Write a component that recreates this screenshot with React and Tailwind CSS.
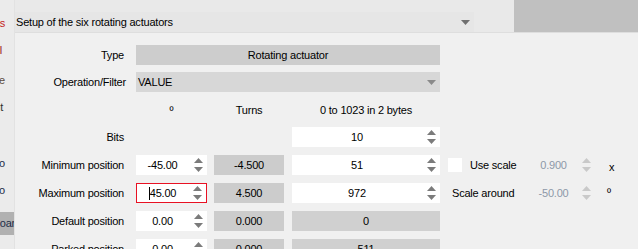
import React from 'react';

function Arrow({ up, color }) {
    return (
        <svg width="9" height="5" viewBox="0 0 9 5" className="block">
            <polygon points={up ? '0,5 4.5,0 9,5' : '0,0 9,0 4.5,5'} fill={color} />
        </svg>
    );
}

function Spinner({ disabled }) {
    const c = disabled ? '#c9c9c9' : '#7b7b7b';
    return (
        <div className="w-[18px] h-full flex flex-col items-center justify-center gap-[4px] shrink-0">
            <Arrow up color={c} />
            <Arrow color={c} />
        </div>
    );
}

function NumBox({ value, className, caret }) {
    return (
        <div className={`h-[20px] flex items-center ${className}`}>
            <div className="flex-1 flex items-center justify-center">
                {caret && <span className="w-px h-[13px] bg-black" />}
                <span>{value}</span>
            </div>
            <Spinner />
        </div>
    );
}

// list on the left, scrolled so only the word endings show
function SideStrip() {
    const items = [
        { text: 'Actuators', cls: 'mt-[14px] w-[5px] text-[#c42222]' },
        { text: 'Control', cls: 'mt-[9px] w-[2px] text-[#981818]' },
        { text: 'Interface', cls: 'mt-[12px] w-[5px] text-[#5b4a40]' },
        { text: 'Layout', cls: 'mt-[9px] w-[3px] text-[#2e2e2e]' },
        { text: 'Servo', cls: 'mt-[38px] w-[5px] text-[#1e2c48]' },
        { text: 'Servo', cls: 'mt-[9px] w-[5px] text-[#1e2c48]' },
    ];
    return (
        <div className="w-[15px] shrink-0 bg-[#ebebeb] border-r border-[#e2e2e2] overflow-hidden flex flex-col">
            {items.map((it, i) => (
                <div key={i} className={`h-[18px] flex items-center justify-end whitespace-nowrap ${it.cls}`}>
                    {it.text}
                </div>
            ))}
            <div className="mt-[13px] w-[21px] h-[23px] bg-[#b1b1b1] flex items-center justify-end whitespace-nowrap text-[#1e2c48]">
                Keyboard
            </div>
        </div>
    );
}

export default function App() {
    return (
        <div className="w-[638px] h-[249px] overflow-hidden flex bg-[#f0f0f0] text-[11px] tracking-[-0.2px] text-black font-['Liberation_Sans',Arial,sans-serif]">
            <SideStrip />
            <div className="flex-1 flex flex-col">
                {/* top bar with the section combo */}
                <div className="h-[33px] shrink-0 flex bg-[#e9e9e9] border-b border-[#dedede]">
                    <div className="w-[459px] mt-[12px] h-[20px] bg-[#e6e6e6] flex items-center pl-px">
                        <span className="flex-1">Setup of the six rotating actuators</span>
                        <div className="w-[18px] flex justify-center">
                            <Arrow color="#707070" />
                        </div>
                    </div>
                    <div className="w-[40px]" />
                    <div className="w-[124px] bg-[#c0c0c0]" />
                </div>

                <div className="flex-1 flex flex-col pt-[12px]">
                    <div className="flex items-center h-[20px] shrink-0">
                        <div className="w-[109px] text-right">Type</div>
                        <div className="ml-[12px] w-[304px] h-[20px] bg-[#cdcdcd] flex items-center justify-center">
                            Rotating actuator
                        </div>
                    </div>

                    <div className="flex items-center h-[20px] mt-[7px] shrink-0">
                        <div className="w-[111px] text-right">Operation/Filter</div>
                        <div className="ml-[10px] w-[304px] h-[20px] bg-[#d7d7d7] flex items-center pl-[2px]">
                            <span className="flex-1">VALUE</span>
                            <div className="w-[18px] flex justify-center">
                                <Arrow color="#8a8a8a" />
                            </div>
                        </div>
                    </div>

                    <div className="flex items-center h-[20px] mt-[8px] shrink-0">
                        <div className="w-[121px]" />
                        <div className="w-[71px] text-center">º</div>
                        <div className="ml-[7px] w-[70px] text-center">Turns</div>
                        <div className="ml-[8px] w-[148px] text-center">0 to 1023 in 2 bytes</div>
                    </div>

                    <div className="flex items-center h-[20px] mt-[7px] shrink-0">
                        <div className="w-[109px] text-right">Bits</div>
                        <div className="w-[12px]" />
                        <div className="w-[156px]" />
                        <NumBox value="10" className="w-[148px] bg-white" />
                    </div>

                    <div className="flex items-center h-[20px] mt-[8px] shrink-0">
                        <div className="w-[109px] text-right">Minimum position</div>
                        <div className="w-[12px]" />
                        <NumBox value="-45.00" className="w-[71px] bg-white" />
                        <div className="ml-[7px] w-[70px] h-[20px] bg-[#cccccc] flex items-center justify-center">-4.500</div>
                        <NumBox value="51" className="ml-[8px] w-[148px] bg-white" />
                        <div className="ml-[8px] w-[82px] flex items-center">
                            <div className="w-[14px] h-[14px] bg-white" />
                            <span className="ml-[8px]">Use scale</span>
                        </div>
                        <div className="w-[65px] h-[20px] flex items-center text-[#8d98a8]">
                            <span className="flex-1 text-center">0.900</span>
                            <Spinner disabled />
                        </div>
                        <span className="ml-[14px] mt-[4px]">x</span>
                    </div>

                    <div className="flex items-center h-[20px] mt-[8px] shrink-0">
                        <div className="w-[109px] text-right">Maximum position</div>
                        <div className="w-[12px]" />
                        <NumBox value="45.00" caret className="w-[71px] bg-white border border-[#e81123]" />
                        <div className="ml-[7px] w-[70px] h-[20px] bg-[#cccccc] flex items-center justify-center">4.500</div>
                        <NumBox value="972" className="ml-[8px] w-[148px] bg-white" />
                        <div className="ml-[8px] w-[82px] pl-[4px]">Scale around</div>
                        <div className="w-[65px] h-[20px] flex items-center text-[#8d98a8]">
                            <span className="flex-1 text-center">-50.00</span>
                            <Spinner disabled />
                        </div>
                        <span className="ml-[12px] -mt-[2px]">º</span>
                    </div>

                    <div className="flex items-center h-[20px] mt-[8px] shrink-0">
                        <div className="w-[109px] text-right">Default position</div>
                        <div className="w-[12px]" />
                        <NumBox value="0.00" className="w-[71px] bg-white" />
                        <div className="ml-[7px] w-[70px] h-[20px] bg-[#cccccc] flex items-center justify-center">0.000</div>
                        <div className="ml-[8px] w-[148px] h-[20px] bg-[#d0d0d0] flex items-center justify-center">0</div>
                    </div>

                    <div className="flex items-center h-[20px] mt-[8px] shrink-0">
                        <div className="w-[109px] text-right">Parked position</div>
                        <div className="w-[12px]" />
                        <NumBox value="0.00" className="w-[71px] bg-white" />
                        <div className="ml-[7px] w-[70px] h-[20px] bg-[#cccccc] flex items-center justify-center">0.000</div>
                        <div className="ml-[8px] w-[148px] h-[20px] bg-[#d0d0d0] flex items-center justify-center">511</div>
                    </div>
                </div>
            </div>
        </div>
    );
}
